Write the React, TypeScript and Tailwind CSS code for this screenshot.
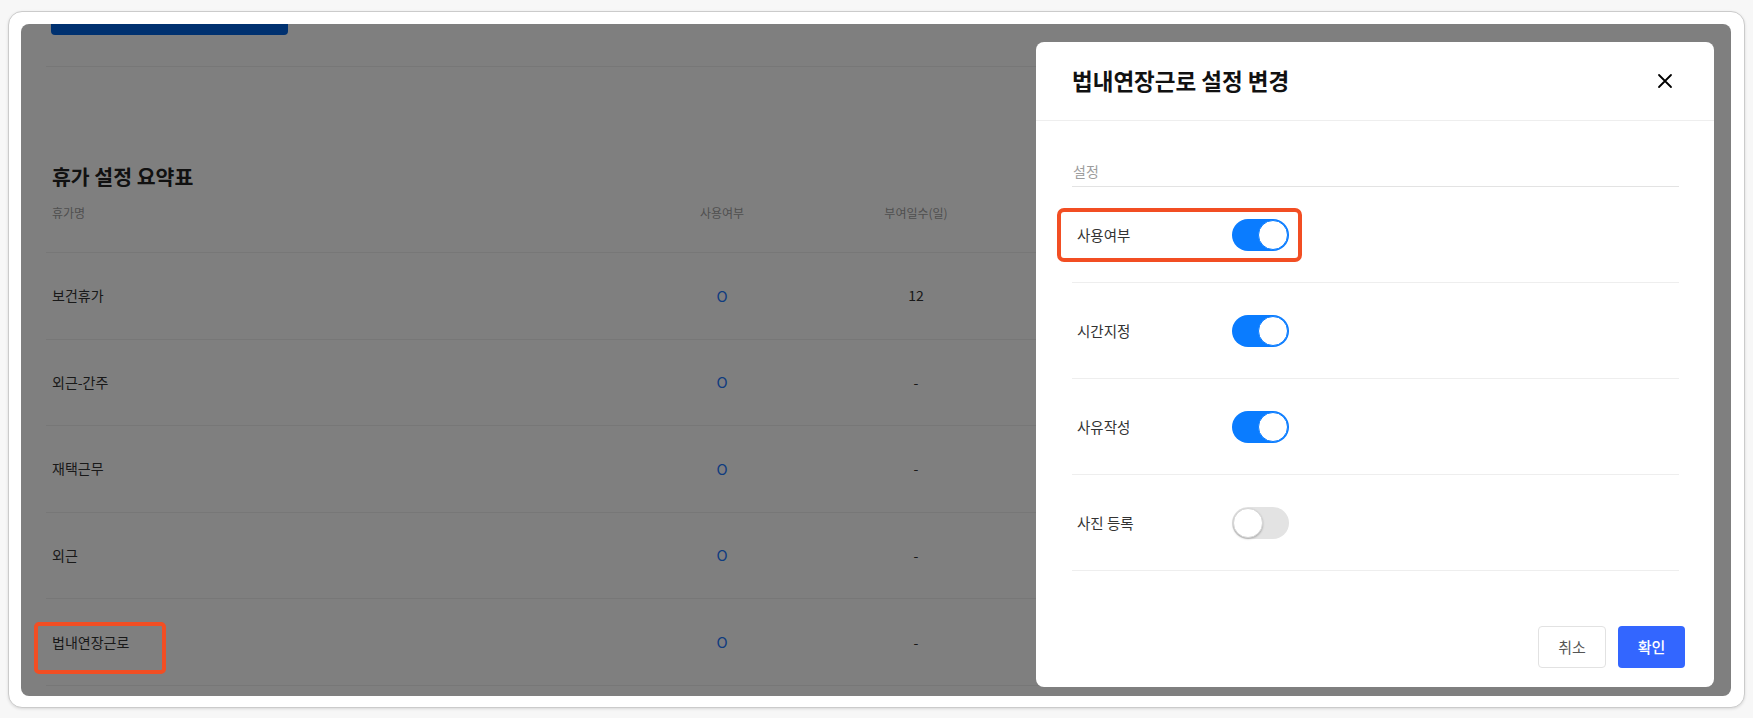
import type { ReactNode } from 'react'

const font = "font-['Noto_Sans_CJK_KR','Noto_Sans',sans-serif]"

type Leave = { name: string; used: string; days: string }

const leaves: Leave[] = [
  { name: '보건휴가', used: 'O', days: '12' },
  { name: '외근-간주', used: 'O', days: '-' },
  { name: '재택근무', used: 'O', days: '-' },
  { name: '외근', used: 'O', days: '-' },
  { name: '법내연장근로', used: 'O', days: '-' },
]

const settings = [
  { label: '사용여부', on: true },
  { label: '시간지정', on: true },
  { label: '사유작성', on: true },
  { label: '사진 등록', on: false },
]

function Toggle({ on }: { on: boolean }) {
  return (
    <span
      className={
        on
          ? 'flex h-[32px] w-[57px] items-center justify-end rounded-full bg-[#0a7cff] px-[1px]'
          : 'flex h-[32px] w-[57px] items-center justify-start rounded-full bg-[#e3e3e3] px-[1px]'
      }
    >
      <span
        className={
          on
            ? 'h-[30px] w-[30px] rounded-full border border-[#0a7cff] bg-white'
            : 'h-[30px] w-[30px] rounded-full border border-[#d6d6d6] bg-white shadow-[0_1px_2px_rgba(0,0,0,0.25)]'
        }
      />
    </span>
  )
}

function Cell({ children, className }: { children: ReactNode; className?: string }) {
  return <div className={className}>{children}</div>
}

export default function App() {
  return (
    <div className={`h-[718px] w-full overflow-hidden bg-[#f7f7f7] ${font}`}>
      <div className="mx-[8px] mt-[11px] h-[697px] rounded-[14px] border border-[#cbcbcb] bg-white pt-[12px] pr-[13px] pb-[11px] pl-[12px] shadow-[0_1px_3px_rgba(0,0,0,0.12)]">
        <div className="relative h-[672px] w-[1710px] overflow-hidden rounded-[8px] bg-white">
          {/* page behind the dialog */}
          <div className="h-[11px] w-[237px] ml-[30px] rounded-b-[4px] bg-[#0062e0]" />
          <div className="mx-[25px] mt-[31px] border-t border-[#eeeeee]">
            <h2 className="mt-[95px] pl-[6px] text-[20.5px] font-bold leading-[28px] text-[#222]">휴가 설정 요약표</h2>
            <div className="grid h-[63px] grid-cols-[616px_120px_268px_1fr] border-b border-[#efefef] pt-[15px] text-[12px] leading-4 text-[#a0a0a0]">
              <Cell className="pl-[6px]">휴가명</Cell>
              <Cell className="text-center">사용여부</Cell>
              <Cell className="text-center">부여일수(일)</Cell>
              <Cell className="text-center">{''}</Cell>
            </div>
            {leaves.map((l) => (
              <div
                key={l.name}
                className="grid h-[86.6px] grid-cols-[616px_120px_268px_1fr] items-center border-b border-[#efefef] text-[14px] text-[#333]"
              >
                <Cell className="pl-[6px]">{l.name}</Cell>
                <Cell className="text-center text-[15px] text-[#1e78ff]">{l.used}</Cell>
                <Cell className="text-center">{l.days}</Cell>
                <Cell>{''}</Cell>
              </div>
            ))}
          </div>

          <div className="absolute inset-0 bg-black/50" />

          {/* dialog */}
          <div className="absolute top-[18px] right-[17px] flex h-[645px] w-[678px] flex-col rounded-[8px] bg-white">
            <div className="flex h-[79px] items-center justify-between border-b border-[#eeeeee] pl-[36px] pr-[37px]">
              <h3 className="text-[22.5px] font-semibold text-[#111]">법내연장근로 설정 변경</h3>
              <button type="button" aria-label="닫기" className="flex h-6 w-6 items-center justify-center text-black">
                <svg width="16" height="16" viewBox="0 0 16 16" fill="none" stroke="currentColor" strokeWidth="1.8" strokeLinecap="round">
                  <path d="M2 2L14 14M14 2L2 14" />
                </svg>
              </button>
            </div>

            <div className="flex-1 pt-[40px] pl-[36px] pr-[35px]">
              <div className="border-b border-[#e3e3e3] pb-[5px] pl-[1px] text-[14px] leading-5 text-[#9c9c9c]">설정</div>
              {settings.map((s) => (
                <div key={s.label} className="flex h-[96px] items-center border-b border-[#eeeeee] pl-[5px]">
                  <span className="w-[155px] text-[14.5px] text-[#333]">{s.label}</span>
                  <Toggle on={s.on} />
                </div>
              ))}
            </div>

            <div className="flex justify-end gap-[12px] pr-[29px] pb-[19px]">
              <button type="button" className="h-[42px] w-[68px] rounded-[4px] border border-[#e2e2e2] bg-white text-[15px] text-[#555]">
                취소
              </button>
              <button type="button" className="h-[42px] w-[67px] rounded-[4px] bg-[#3366ff] text-[15px] font-medium text-white">
                확인
              </button>
            </div>
          </div>

          {/* annotations */}
          <div className="absolute top-[184px] left-[1036px] h-[54px] w-[245px] rounded-[7px] border-4 border-[#f24e23]" />
          <div className="absolute top-[598px] left-[13px] h-[52px] w-[132px] rounded-[5px] border-4 border-[#f24e23]" />
        </div>
      </div>
    </div>
  )
}
